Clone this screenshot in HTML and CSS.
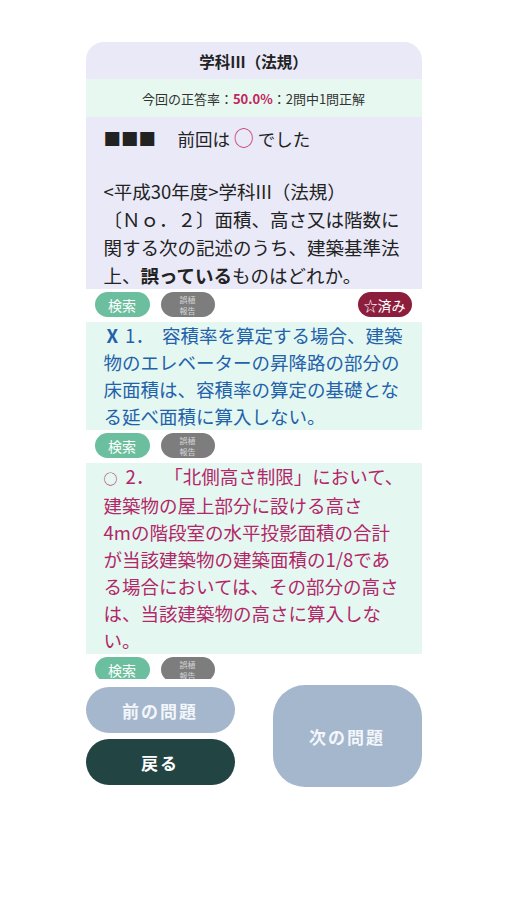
FILE: index.html
```html
<!DOCTYPE html>
<html lang="ja">
<head>
<meta charset="utf-8">
<title>学科III（法規）</title>
<link rel="stylesheet" href="styles.css">
</head>
<body>
<div class="app">
  <div class="scroll">
    <div class="card">
      <div class="title">学科III（法規）</div>
      <div class="stats">今回の正答率：<b class="rate">50.0%</b>：2問中1問正解</div>
      <div class="question">
        <p class="status">■■■　 前回は <span class="maru">○</span> でした</p>
        <p class="qtext">&lt;平成30年度&gt;学科III（法規）<br>〔Ｎｏ．２〕面積、高さ又は階数に関する次の記述のうち、建築基準法上、<b>誤っている</b>ものはどれか。</p>
      </div>
    </div>
    <div class="tools">
      <span class="btn search">検索</span>
      <span class="btn report">誤植<br>報告</span>
      <span class="btn star">☆済み</span>
    </div>
    <div class="answer wrong"><b class="mark">X</b>1．<span class="gap"></span>容積率を算定する場合、建築物のエレベーターの昇降路の部分の床面積は、容積率の算定の基礎となる延べ面積に算入しない。</div>
    <div class="tools">
      <span class="btn search">検索</span>
      <span class="btn report">誤植<br>報告</span>
    </div>
    <div class="answer right"><span class="small-maru">○</span>2．<span class="gap wide"></span>「北側高さ制限」において、建築物の屋上部分に設ける高さ<br>4mの階段室の水平投影面積の合計が当該建築物の建築面積の1/8である場合においては、その部分の高さは、当該建築物の高さに算入しない。</div>
    <div class="tools">
      <span class="btn search">検索</span>
      <span class="btn report">誤植<br>報告</span>
    </div>
  </div>
  <div class="nav">
    <div class="nav-left">
      <span class="nbtn prev">前の問題</span>
      <span class="nbtn back">戻る</span>
    </div>
    <span class="nbtn next">次の問題</span>
  </div>
</div>
</body>
</html>
```
FILE: styles.css
```css
* { box-sizing: border-box; }
body {
  margin: 0;
  background: #ffffff;
  font-family: "Noto Sans CJK JP", "Noto Sans", sans-serif;
  color: #222;
}
.app {
  width: 336px;
  margin: 42px auto 0;
}
.scroll {
  height: 637px;
  overflow: hidden;
}
.card {
  background: #e9e9f7;
  border-radius: 18px 18px 0 0;
}
.title {
  height: 37px;
  display: flex;
  align-items: center;
  justify-content: center;
  font-size: 15.5px;
  font-weight: 700;
  color: #222;
}
.stats {
  height: 38px;
  background: #e7f8f0;
  display: flex;
  align-items: center;
  justify-content: center;
  font-size: 13px;
  color: #333;
}
.rate { color: #c2245e; font-weight: 700; }
.question {
  padding: 8px 16px 0 18px;
}
.status {
  margin: 0 0 24px;
  font-size: 17.5px;
  line-height: 28px;
  color: #222;
}
.maru {
  color: #c8326a;
  font-size: 20px;
  line-height: 0;
}
.qtext {
  margin: 0;
  font-size: 18.5px;
  line-height: 28px;
  color: #222;
}
.qtext b { font-weight: 700; }
.tools {
  display: flex;
  align-items: center;
  gap: 11px;
  padding: 3px 10px 5px 9px;
}
.btn {
  height: 25px;
  border-radius: 13px;
  display: flex;
  align-items: center;
  justify-content: center;
  color: #fff;
  font-size: 14px;
}
.search { width: 55px; background: #6cbf9e; }
.report {
  width: 54px;
  background: #7d7d7d;
  color: #d6d6d6;
  font-size: 8px;
  line-height: 11px;
  text-align: center;
}
.star {
  width: 54px;
  margin-left: auto;
  background: #8c1d3d;
}
.answer {
  background: #e5f7f1;
  padding: 0 16px 0 18px;
  font-size: 18.5px;
  line-height: 27px;
}
.wrong { color: #2362aa; }
.right { color: #b22768; }
.mark {
  font-weight: 700;
  margin: 0 7px 0 3px;
}
.gap {
  display: inline-block;
  width: 8px;
}
.gap.wide { width: 10px; }
.small-maru {
  font-size: 14px;
  margin-right: 8px;
}
.nav {
  margin-top: 6px;
  display: flex;
  justify-content: space-between;
  align-items: center;
}
.nav-left {
  display: flex;
  flex-direction: column;
  gap: 6px;
}
.nbtn {
  width: 149px;
  display: flex;
  align-items: center;
  justify-content: center;
  font-size: 17px;
  font-weight: 700;
  letter-spacing: 2px;
  color: #f3f6fa;
}
.prev, .back {
  height: 46px;
  border-radius: 23px;
}
.prev { background: #a4b7cd; }
.back { background: #224443; color: #fff; }
.next {
  height: 102px;
  border-radius: 32px;
  background: #a4b7cd;
}
```
